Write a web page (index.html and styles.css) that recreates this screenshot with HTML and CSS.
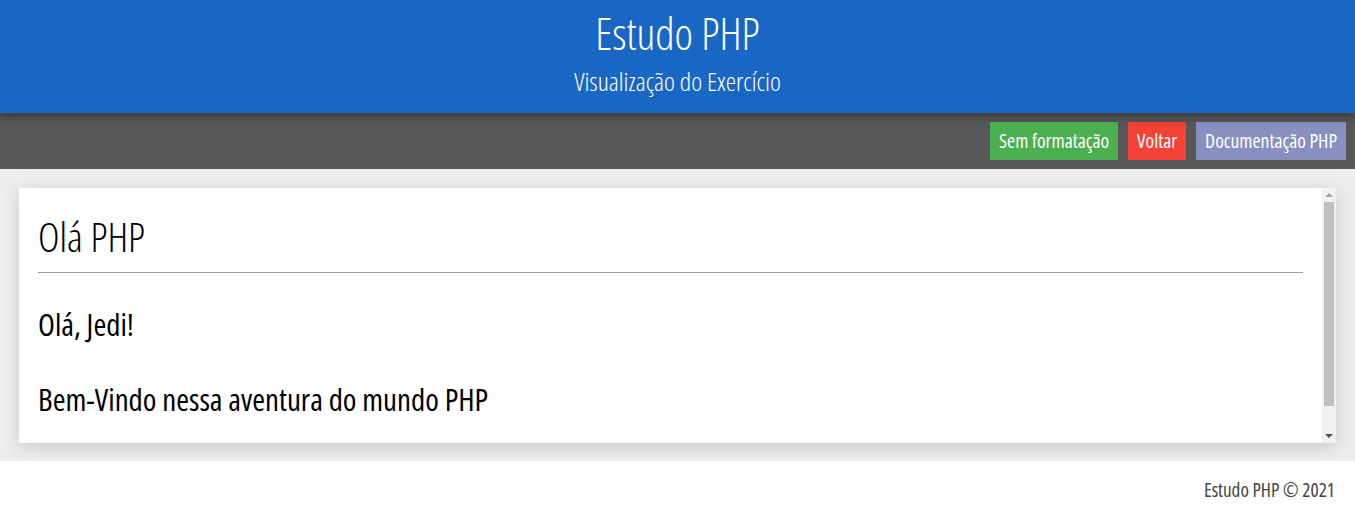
FILE: index.html
```html
<!DOCTYPE html>
<html lang="pt-br">
<head>
<meta charset="utf-8">
<title>Estudo PHP</title>
<link rel="stylesheet" href="styles.css">
</head>
<body>
<header class="top">
  <h1 class="site-title">Estudo PHP</h1>
  <p class="site-sub">Visualização do Exercício</p>
</header>
<nav class="toolbar">
  <a class="btn btn-green" href="#">Sem formatação</a>
  <a class="btn btn-red" href="#">Voltar</a>
  <a class="btn btn-lav" href="#">Documentação PHP</a>
</nav>
<main class="main">
  <section class="card">
    <div class="card-body">
      <h1 class="card-title">Olá PHP</h1>
      <hr class="rule">
      <h2 class="line">Olá, Jedi!</h2>
      <h2 class="line">Bem-Vindo nessa aventura do mundo PHP</h2>
    </div>
    <div class="scrollbar">
      <span class="arrow arrow-up"></span>
      <span class="track"><span class="thumb"></span></span>
      <span class="arrow arrow-down"></span>
    </div>
  </section>
</main>
<footer class="foot">Estudo PHP © 2021</footer>
</body>
</html>
```
FILE: styles.css
```css
* { box-sizing: border-box; }
html, body { margin: 0; padding: 0; }
body {
  font-family: "Open Sans", "Noto Sans", sans-serif;
  font-stretch: 75%;
  background: #fff;
  color: #000;
}
.top {
  position: relative;
  z-index: 2;
  background: #1967c4;
  color: #fff;
  height: 113px;
  text-align: center;
  padding-top: 5px;
  box-shadow: 0 4px 8px rgba(0,0,0,0.35);
}
.site-title {
  margin: 0;
  font-size: 44px;
  font-weight: 300;
  line-height: 56px;
}
.site-sub {
  margin: 0;
  margin-top: 2px;
  font-weight: 300;
  font-size: 26px;
  line-height: 36px;
}
.toolbar {
  background: #575757;
  height: 56px;
  display: flex;
  justify-content: flex-end;
  align-items: flex-start;
  gap: 10px;
  padding: 9px 9px 0 0;
}
.btn {
  display: block;
  color: #fff;
  text-decoration: none;
  font-size: 19.6px;
  height: 38px;
  line-height: 37px;
  padding: 0 9px;
}
.btn-green { background: #4caf50; }
.btn-red { background: #f44336; }
.btn-lav { background: #8790c0; }
.main {
  background: #eeeeee;
  padding: 19px;
  height: 292px;
}
.card {
  display: flex;
  background: #fff;
  height: 255px;
  box-shadow: 0 4px 18px rgba(0,0,0,0.16);
}
.card-body {
  flex: 1;
  overflow: hidden;
  padding: 0 19px;
}
.card-title {
  margin: 0;
  padding-top: 23px;
  font-size: 41px;
  font-weight: 300;
  line-height: 50px;
}
.rule {
  border: 0;
  border-top: 1px solid #9e9e9e;
  margin: 11px 0 0 0;
}
.line {
  margin: 0;
  font-size: 31px;
  font-weight: 500;
  line-height: 40px;
}
.rule + .line { margin-top: 31px; }
.line + .line { margin-top: 35px; }
.scrollbar {
  width: 14px;
  background: #f1f1f1;
  display: flex;
  flex-direction: column;
  align-items: center;
}
.arrow {
  width: 0;
  height: 0;
  border-left: 4px solid transparent;
  border-right: 4px solid transparent;
}
.arrow-up {
  margin-top: 5px;
  border-bottom: 4px solid #a3a3a3;
}
.arrow-down {
  margin-bottom: 5px;
  border-top: 4px solid #505050;
}
.track {
  flex: 1;
  width: 100%;
  padding: 5px 2px 0 2px;
  display: flex;
}
.thumb {
  width: 100%;
  height: 204px;
  background: #c1c1c1;
}
.foot {
  text-align: right;
  color: #444;
  font-size: 19.2px;
  padding: 15px 20px 0 0;
}
```
